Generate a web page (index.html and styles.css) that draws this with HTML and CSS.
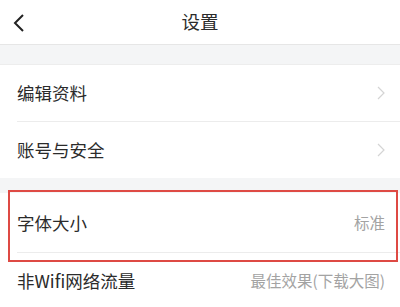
FILE: index.html
```html
<!DOCTYPE html>
<html lang="zh">
<head>
<meta charset="utf-8">
<title>设置</title>
<link rel="stylesheet" href="styles.css">
</head>
<body>
<div class="page">
  <header class="nav">
    <svg class="back" width="14" height="20" viewBox="0 0 14 20"><path d="M11 2 L3 10 L11 18" fill="none" stroke="#222" stroke-width="2"/></svg>
    <h1 class="title">设置</h1>
  </header>
  <div class="gap gap-top"></div>
  <section class="group">
    <div class="row divided">
      <span class="label">编辑资料</span>
      <svg class="chev" width="8" height="14" viewBox="0 0 8 14"><path d="M1 1 L7 7 L1 13" fill="none" stroke="#d4d4d4" stroke-width="1.2"/></svg>
    </div>
    <div class="row">
      <span class="label">账号与安全</span>
      <svg class="chev" width="8" height="14" viewBox="0 0 8 14"><path d="M1 1 L7 7 L1 13" fill="none" stroke="#d4d4d4" stroke-width="1.2"/></svg>
    </div>
  </section>
  <div class="gap gap-mid"></div>
  <section class="group">
    <div class="row divided tall">
      <span class="label">字体大小</span>
      <span class="value">标准</span>
    </div>
    <div class="row">
      <span class="label">非Wifi网络流量</span>
      <span class="value">最佳效果(下载大图)</span>
    </div>
  </section>
  <div class="highlight"></div>
</div>
</body>
</html>
```
FILE: styles.css
```css
* { box-sizing: border-box; margin: 0; padding: 0; }
html, body { background: #fff; }
body {
  font-family: "Noto Sans CJK SC", "Noto Sans", sans-serif;
  color: #2b2b2b;
  width: 400px;
  height: 307px;
  overflow: hidden;
}
.page { position: relative; width: 400px; height: 307px; }
.nav {
  height: 45px;
  border-bottom: 1px solid #e6e6e6;
  display: flex;
  align-items: center;
  justify-content: center;
  position: relative;
}
.back { position: absolute; left: 12px; top: 13px; }
.title { font-size: 18.5px; font-weight: 400; color: #2b2b2b; line-height: 1; margin-top: -2px; }
.gap { background: #f4f5f6; }
.gap-top { height: 20px; border-bottom: 1px solid #ededed; }
.gap-mid { height: 15px; }
.row {
  height: 56px;
  display: flex;
  align-items: center;
  justify-content: space-between;
  padding: 0 15px 0 17px;
  position: relative;
}
.row.tall { height: 59px; }
.divided::after {
  content: "";
  position: absolute;
  left: 17px;
  right: 0;
  bottom: -1px;
  height: 1px;
  background: #ececec;
}
.divided { margin-bottom: 1px; }
.label { font-size: 17.5px; color: #2b2b2b; line-height: 1; }
.value { font-size: 15.5px; color: #a3a3a3; line-height: 1; }
.highlight {
  position: absolute;
  left: 8px;
  top: 190px;
  width: 390px;
  height: 72px;
  border: 2px solid #de4a44;
}
```
